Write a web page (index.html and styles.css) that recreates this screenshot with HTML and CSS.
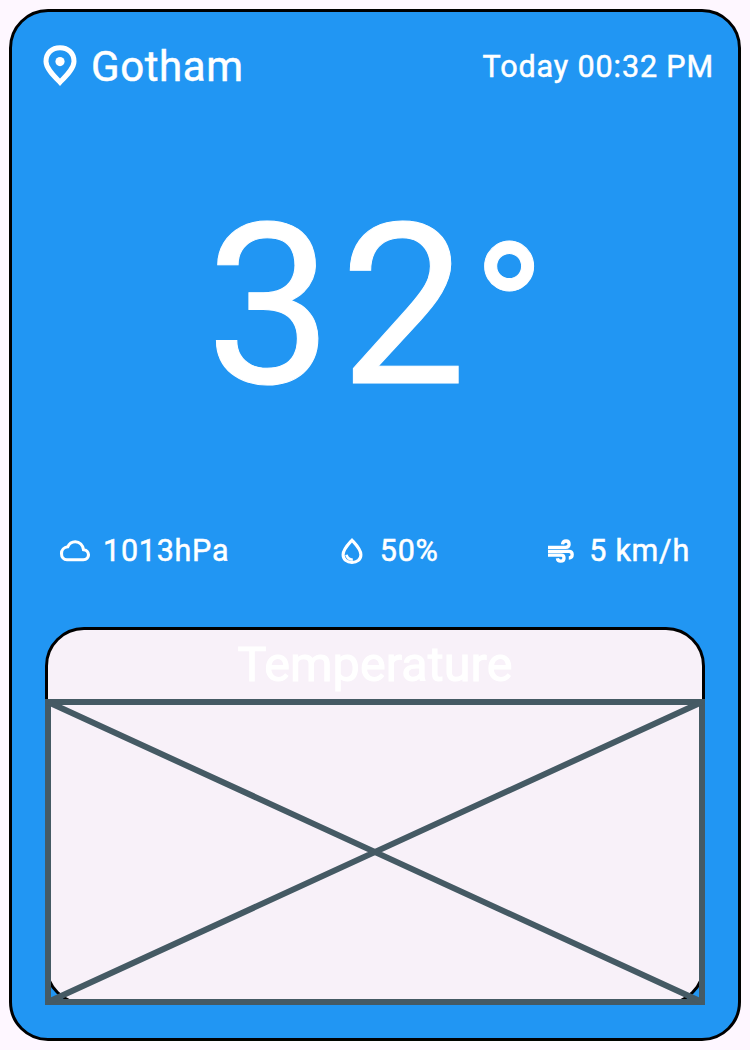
FILE: index.html
```html
<!DOCTYPE html>
<html lang="en">
<head>
<meta charset="utf-8">
<title>Weather</title>
<link rel="stylesheet" href="styles.css">
</head>
<body>
<main class="card">
  <header class="header">
    <div class="place">
      <svg class="pin" viewBox="0 0 36 42" fill="none"><path d="M18 37.3C12.5 31.6 4 23.5 4 16.5C4 8 10 2.7 18 2.7S32 8 32 16.5C32 23.5 23.5 31.6 18 37.3Z" stroke="#fff" stroke-width="5"/><circle cx="18" cy="16.6" r="4.6" fill="#fff"/></svg>
      <span class="city">Gotham</span>
    </div>
    <span class="time">Today 00:32 PM</span>
  </header>
  <div class="degrees">32<span class="ring">°</span></div>
  <div class="stats">
    <div class="stat cloud">
      <svg class="icon" viewBox="0 0 36 36" fill="none" stroke="#fff" stroke-width="3.1"><path d="M10 26.7H26.3C29.7 26.7 31.5 24.4 31.5 21.7C31.5 19 29.3 16.9 26.5 16.6C25.8 12.4 22.7 8.7 18.3 8.7C15 8.7 12.1 10.7 10.7 13.8C7 14.3 4.5 17 4.5 20.4C4.5 24 6.8 26.7 10 26.7Z"/></svg>
      <span>1013hPa</span>
    </div>
    <div class="stat drop">
      <svg class="icon" viewBox="0 0 36 36" fill="none" stroke="#fff"><path d="M18 7.2C14.4 11.2 9.1 16.2 9.1 21.7C9.1 26.5 13 29.5 18 29.5S26.9 26.5 26.9 21.7C26.9 16.2 21.6 11.2 18 7.2Z" stroke-width="3.1"/><path d="M12.5 21.8C13 25 15.3 26.5 18.8 26.8" stroke-width="2.6"/></svg>
      <span>50%</span>
    </div>
    <div class="stat wind">
      <svg class="icon" viewBox="0 0 36 36" fill="none" stroke="#fff" stroke-width="3.3"><path d="M5 14.4H22.5C25.2 14.4 26.1 13 26.1 11.3C26.1 9.2 24.9 8 23.1 8C21 8 19.7 9.3 19.5 11.4"/><path d="M5 18.3H26C28.3 18.3 29.2 19.7 29.2 21.5C29.2 23.7 28.1 25 25.8 25"/><path d="M5 22.2H18.2C20.2 22.2 21 23.4 21 25C21 27 19.7 28.2 17.6 28.2C15.6 28.2 14.6 27 14.4 25.3"/></svg>
      <span>5 km/h</span>
    </div>
  </div>
  <section class="panel">
    <h2 class="title">Temperature</h2>
    <svg class="placeholder" viewBox="0 0 660 306" fill="none" stroke="#455a64" stroke-width="6"><rect x="3" y="3" width="654" height="300"/><path d="M3 3L657 303M657 3L3 303"/></svg>
  </section>
</main>
</body>
</html>
```
FILE: styles.css
```css
* { box-sizing: border-box; }
body {
  margin: 0;
  padding: 9px;
  height: 1050px;
  overflow: hidden;
  background: #fef7ff;
  color: #fff;
  font-family: Roboto, sans-serif;
  -webkit-text-stroke: .5px #fff;
}
.card {
  height: 1032px;
  border: 3px solid #000;
  border-radius: 39px;
  background: #2196f3;
  padding: 30px 23px 0 30px;
}
.header {
  display: flex;
  justify-content: space-between;
  align-items: center;
  height: 47px;
}
.place { display: flex; align-items: center; gap: 13px; }
.pin { width: 36px; height: 42px; }
.city { padding-top: 2px; font-size: 42px; letter-spacing: .6px; }
.time { padding: 2px 1px 0 0; font-size: 30.5px; letter-spacing: .88px; }
.degrees {
  height: 426px;
  padding: 82px 0 0 164px;
  font-size: 225px;
  line-height: 270px;
  letter-spacing: 7.5px;
  white-space: nowrap;
  -webkit-text-stroke: 1px #fff;
}
.ring {
  margin-left: -2px;
  font-size: 198px;
  line-height: 1;
  vertical-align: -1px;
}
.stats {
  display: flex;
  justify-content: space-between;
  height: 36px;
  margin: 18px 25px 0 15px;
  font-size: 30.5px;
  line-height: 36px;
  letter-spacing: .75px;
}
.stat { display: flex; align-items: center; gap: 10px; white-space: nowrap; }
.icon { width: 36px; height: 36px; }
.panel {
  width: 660px;
  height: 378px;
  margin: 58px 0 0 3px;
  border: 3px solid #000;
  border-radius: 39px;
  background: #f8f1f9;
}
.title {
  margin: 0;
  height: 69px;
  text-align: center;
  font-size: 48.5px;
  font-weight: 400;
  line-height: 70px;
  letter-spacing: .1px;
  -webkit-text-stroke: 1px #fff;
}
.placeholder { display: block; width: 660px; height: 306px; margin-left: -3px; }
```
